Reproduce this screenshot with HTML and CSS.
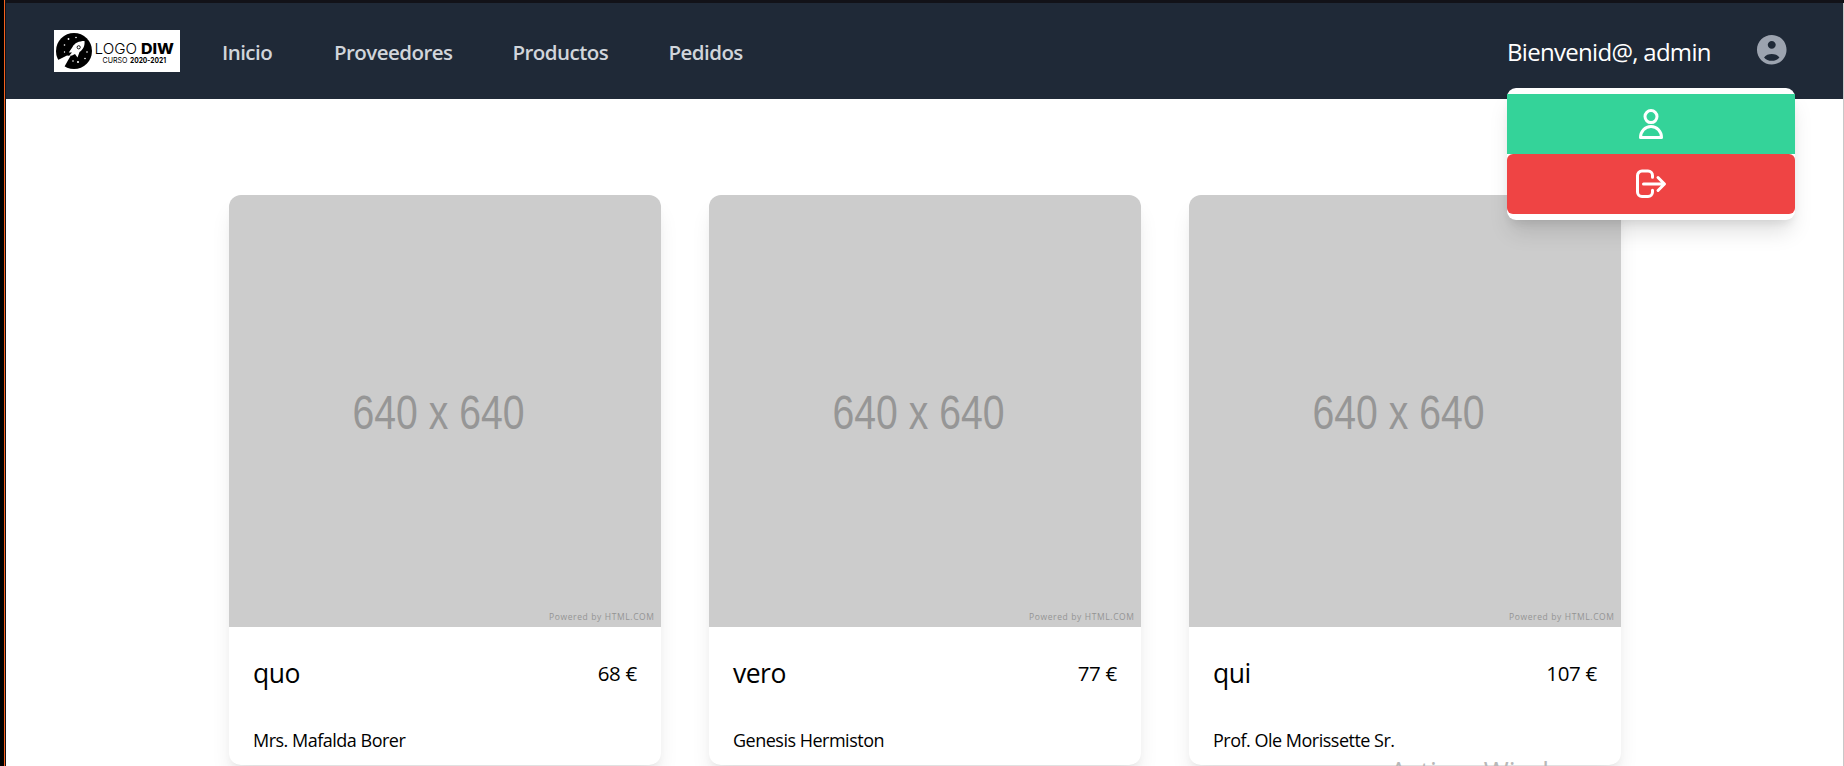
FILE: index.html
```html
<!DOCTYPE html>
<html lang="es">
<head>
<meta charset="utf-8">
<title>Logo DIW</title>
<link rel="stylesheet" href="styles.css">
</head>
<body>
<div class="page">
  <header class="navbar">
    <svg class="logo" viewBox="0 0 126 42">
      <rect width="126" height="42" fill="#fff"/>
      <circle cx="20" cy="21" r="18" fill="#000"/>
      <path d="M0 32.500 L4 30 L13 25.500 L16.500 26 L14.500 29.500 L10.500 36.500 L7 41 L0 41Z" fill="#fff"/>
      <path d="M30.500 11 C25 11 20.500 13 18.500 17 L14.800 22.500 L18 22.500 L15 26 L18 25.500 L21 24 L23.500 27.500 L25.500 22 C29.500 19.500 31 15.500 30.500 11Z" fill="#fff"/>
      <circle cx="24.700" cy="17.300" r="1.600" fill="#fff" stroke="#000" stroke-width=".9"/>
      <g fill="#fff"><circle cx="14.500" cy="9" r=".9"/><circle cx="22" cy="7.500" r=".8"/><circle cx="10.500" cy="15" r=".8"/><circle cx="10.500" cy="22" r=".7"/><circle cx="19" cy="31" r=".8"/><circle cx="24" cy="32" r="1"/><circle cx="31" cy="28.500" r=".8"/><circle cx="33" cy="22" r=".8"/></g>
      <g font-family="Inter, sans-serif">
        <text x="40.500" y="24" font-size="14.500" font-weight="300" textLength="42.500" lengthAdjust="spacingAndGlyphs">LOGO</text>
        <text x="87" y="24" font-size="14.500" font-weight="800" textLength="33" lengthAdjust="spacingAndGlyphs">DIW</text>
        <text x="48.500" y="33" font-size="7.500" textLength="25" lengthAdjust="spacingAndGlyphs">CURSO</text>
        <text x="76" y="33" font-size="7.500" font-weight="700" textLength="36" lengthAdjust="spacingAndGlyphs">2020-2021</text>
      </g>
    </svg>
    <nav class="links">
      <a class="link l1">Inicio</a><a class="link l2">Proveedores</a><a class="link l3">Productos</a><a class="link l4">Pedidos</a>
    </nav>
    <div class="user">
      <span class="hello">Bienvenid@, admin</span>
      <svg class="avatar" viewBox="0 0 24 24"><path fill="#9ca3af" d="M12 2C6.480 2 2 6.480 2 12s4.480 10 10 10 10-4.480 10-10S17.520 2 12 2zm0 4c1.500 0 2.700 1.200 2.700 2.700S13.500 11.400 12 11.400 9.300 10.200 9.300 8.700 10.500 6 12 6zm0 13.500c-2.100 0-4-.9-5.200-2.300 1-1.500 3.200-2.300 5.200-2.300s4.200.8 5.200 2.300c-1.200 1.400-3.100 2.300-5.200 2.300z"/></svg>
      <div class="menu">
        <a class="item profile"><svg viewBox="0 0 36 36"><circle cx="18" cy="10.600" r="6"/><path d="M7.500 31.500h21c0-6-4.500-11-10.500-11s-10.500 5-10.500 11z"/></svg></a>
        <a class="item logout"><svg viewBox="0 0 36 36"><path d="M19.500 11.200V9.500a4.500 4.500 0 0 0-4.500-4.500H9a4.500 4.500 0 0 0-4.500 4.500v16.500A4.500 4.500 0 0 0 9 30.500h6a4.500 4.500 0 0 0 4.500-4.500v-1.700M10.500 18H31M25 11.500l6.500 6.500-6.500 6.500"/></svg></a>
      </div>
    </div>
  </header>
  <main class="grid">
    <article class="card">
      <svg class="photo" viewBox="0 0 432 432"><rect width="432" height="432" fill="#ccc"/><text class="size" x="123.500" y="234" textLength="172" lengthAdjust="spacingAndGlyphs">640 x 640</text><text class="powered" x="320" y="424.500" textLength="105">Powered by HTML.COM</text></svg>
      <div class="row"><h2 class="title">quo</h2><span class="price">68 €</span></div>
      <p class="maker">Mrs. Mafalda Borer</p>
    </article>
    <article class="card">
      <svg class="photo" viewBox="0 0 432 432"><rect width="432" height="432" fill="#ccc"/><text class="size" x="123.500" y="234" textLength="172" lengthAdjust="spacingAndGlyphs">640 x 640</text><text class="powered" x="320" y="424.500" textLength="105">Powered by HTML.COM</text></svg>
      <div class="row"><h2 class="title">vero</h2><span class="price">77 €</span></div>
      <p class="maker">Genesis Hermiston</p>
    </article>
    <article class="card">
      <svg class="photo" viewBox="0 0 432 432"><rect width="432" height="432" fill="#ccc"/><text class="size" x="123.500" y="234" textLength="172" lengthAdjust="spacingAndGlyphs">640 x 640</text><text class="powered" x="320" y="424.500" textLength="105">Powered by HTML.COM</text></svg>
      <div class="row"><h2 class="title">qui</h2><span class="price">107 €</span></div>
      <p class="maker">Prof. Ole Morissette Sr.</p>
    </article>
  </main>
</div>
<div class="watermark">Activar Windows</div>
</body>
</html>
```
FILE: styles.css
```css
* { box-sizing: border-box; }
html { height: 766px; overflow: hidden; }
body { margin: 0; height: 766px; overflow: hidden; padding: 3px 1px 0 5px; background: #121218; font-family: "Open Sans", "Noto Sans", sans-serif; box-shadow: inset 4px 0 #000; position: relative; }
body::before { content: ""; position: absolute; left: 4px; top: 0; width: 1px; height: 766px; background: #f4611e; }
body::after { content: ""; position: absolute; right: 0; top: 3px; width: 1px; height: 763px; background: #c8c8c8; }
.page { margin-left: 1px; height: 763px; background: #fff; overflow: hidden; }
.navbar { height: 96px; background: #1f2937; display: flex; align-items: center; padding: 0 48px; }
.logo { width: 126px; height: 42px; display: block; }
.links { display: flex; margin-left: 42px; padding-top: 2px; flex: 1; }
.link { font-size: 20.5px; line-height: 30px; font-weight: 600; letter-spacing: -.55px; color: #d1d5db; white-space: nowrap; }
.l1 { width: 112px; } .l2 { width: 178.5px; } .l3 { width: 156px; }
.user { position: relative; display: flex; align-items: center; width: 288px; height: 96px; justify-content: space-between; }
.hello { font-size: 24px; line-height: 36px; letter-spacing: -.7px; padding-top: 2px; color: #fff; white-space: nowrap; }
.avatar { width: 35.5px; height: 35.5px; margin: 0 6px 2px 0; }
.menu { position: absolute; top: 85px; left: 0; width: 288px; padding: 6px 0; background: #fff; border-radius: 9px; box-shadow: 0 15px 22px -4px rgba(0,0,0,.13), 0 6px 9px -3px rgba(0,0,0,.08); z-index: 2; }
.item { display: flex; height: 60px; align-items: center; justify-content: center; }
.item svg { width: 36px; height: 36px; fill: none; stroke: #fff; stroke-width: 3; stroke-linecap: round; stroke-linejoin: round; }
.profile { background: #34d399; }
.logout { background: #ef4444; border-radius: 6px; }
.grid { display: grid; grid-template-columns: repeat(3, 432px); gap: 48px; padding: 96px 0 0 223px; }
.card { height: 570px; border-radius: 12px; overflow: hidden; background: #fff; box-shadow: 0 15px 22px -4px rgba(0,0,0,.1), 0 6px 9px -3px rgba(0,0,0,.05); }
.photo { display: block; width: 432px; height: 432px; }
.size { font: 48px "Liberation Sans", sans-serif; fill: #969696; }
.powered { font: 8.5px "Open Sans", sans-serif; fill: #949494; }
.row { display: flex; justify-content: space-between; padding: 28px 24px 0; height: 92px; }
.title { margin: 0; font-size: 26.5px; line-height: 36px; letter-spacing: -.5px; }
.price { font-size: 20.5px; line-height: 36px; letter-spacing: -.3px; }
.maker { margin: 0; padding: 8px 24px; font-size: 18px; line-height: 27px; letter-spacing: -.5px; }
.title, .price, .maker { font-weight: 400; color: #000; }
.watermark { position: absolute; left: 1390px; top: 754px; font-size: 27px; line-height: 36px; letter-spacing: .1px; color: #b8b8b8; white-space: nowrap; z-index: 3; }
```
